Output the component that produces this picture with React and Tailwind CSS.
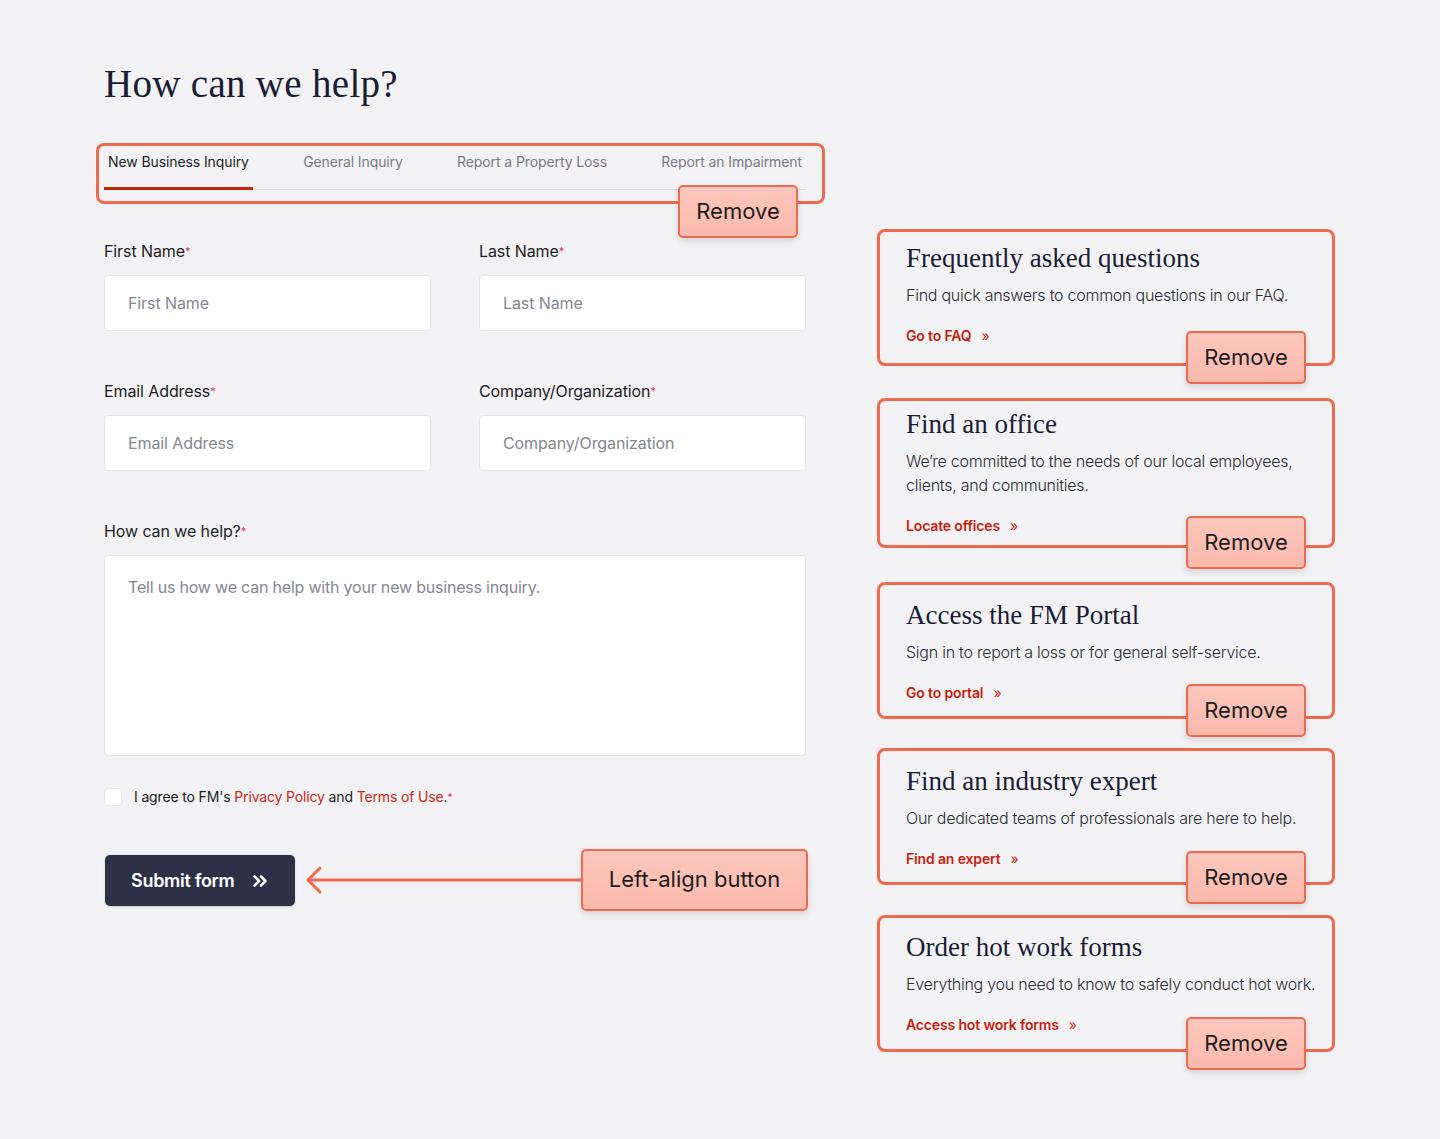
import React from "react";
import { ChevronsRight } from "lucide-react";

function RemoveBtn({ className = "" }) {
  return (
    <div
      className={`absolute w-[120px] h-[53px] rounded-[5px] border-2 border-[#ec6b4f] bg-gradient-to-b from-[#fdc6bc] to-[#fbb9ad] shadow-[0_3px_6px_rgba(0,0,0,0.12)] flex items-center justify-center text-[22px] text-[#1c1c1c] ${className}`}
    >
      Remove
    </div>
  );
}

function Field({ label, placeholder }) {
  return (
    <div className="flex flex-col">
      <label className="text-[16px] leading-[24px] text-[#1d1d25] tracking-[-0.1px]">
        {label}
        <span className="text-[#e2335a] text-[11px] align-top">*</span>
      </label>
      <div className="mt-[12px] h-[56px] bg-white border border-[#e4e4e9] rounded-[4px] flex items-center pl-[23px] text-[16px] text-[#86868f] tracking-[-0.1px]">
        {placeholder}
      </div>
    </div>
  );
}

const items = [
  {
    title: "Frequently asked questions",
    desc: ["Find quick answers to common questions in our FAQ."],
    link: "Go to FAQ",
    boxTop: "top-[-12px]",
    boxH: "h-[137px]",
    btnTop: "top-[90px]",
    mt: "",
  },
  {
    title: "Find an office",
    desc: ["We\u2019re committed to the needs of our local employees,", "clients, and communities."],
    link: "Locate offices",
    boxTop: "top-[-9px]",
    boxH: "h-[150px]",
    btnTop: "top-[109px]",
    mt: "mt-[61px]",
  },
  {
    title: "Access the FM Portal",
    desc: ["Sign in to report a loss or for general self-service."],
    link: "Go to portal",
    boxTop: "top-[-16px]",
    boxH: "h-[137px]",
    btnTop: "top-[86px]",
    mt: "mt-[62px]",
  },
  {
    title: "Find an industry expert",
    desc: ["Our dedicated teams of professionals are here to help."],
    link: "Find an expert",
    boxTop: "top-[-16px]",
    boxH: "h-[137px]",
    btnTop: "top-[87px]",
    mt: "mt-[61px]",
  },
  {
    title: "Order hot work forms",
    desc: ["Everything you need to know to safely conduct hot work."],
    link: "Access hot work forms",
    boxTop: "top-[-15px]",
    boxH: "h-[137px]",
    btnTop: "top-[87px]",
    mt: "mt-[61px]",
  },
];

export default function App() {
  const tabs = [
    "New Business Inquiry",
    "General Inquiry",
    "Report a Property Loss",
    "Report an Impairment",
  ];
  return (
    <div className="min-h-[1139px] w-full bg-[#f2f2f4] font-[Inter,sans-serif] pl-[104px] pt-[61px]">
      <h1 className="font-['Liberation_Serif',serif] text-[39px] leading-[46px] text-[#1b1c35] tracking-[0.3px]">
        How can we help?
      </h1>

      <div className="mt-[43px] flex items-start">
        {/* LEFT: form */}
        <div className="w-[702px] flex flex-col">
          <div className="relative">
            <div className="flex justify-between border-b border-[#d9d9de]">
              {tabs.map((t, i) => (
                <div
                  key={t}
                  className={`h-[40px] pt-[2px] px-[4px] -mb-px text-[14px] leading-[20px] tracking-[-0.1px] ${
                    i === 0
                      ? "text-[#1d1d27] border-b-[3px] border-[#c8250f]"
                      : "text-[#7a7a84]"
                  }`}
                >
                  {t}
                </div>
              ))}
            </div>
            <div className="absolute left-[-8px] top-[-7px] w-[729px] h-[61px] border-[3px] border-[#ec6b4f] rounded-[8px] pointer-events-none" />
            <RemoveBtn className="left-[574px] top-[35px]" />
          </div>

          <div className="mt-[49px] grid grid-cols-2 gap-x-[48px]">
            <Field label="First Name" placeholder="First Name" />
            <Field label="Last Name" placeholder="Last Name" />
          </div>
          <div className="mt-[48px] grid grid-cols-2 gap-x-[48px]">
            <Field label="Email Address" placeholder="Email Address" />
            <Field label="Company/Organization" placeholder="Company/Organization" />
          </div>

          <div className="mt-[48px] flex flex-col">
            <label className="text-[16px] leading-[24px] text-[#1d1d25] tracking-[-0.1px]">
              How can we help?
              <span className="text-[#e2335a] text-[11px] align-top">*</span>
            </label>
            <div className="mt-[12px] h-[201px] bg-white border border-[#e4e4e9] rounded-[4px] pl-[23px] pt-[19px] text-[16px] leading-[24px] text-[#86868f] tracking-[-0.2px]">
              Tell us how we can help with your new business inquiry.
            </div>
          </div>

          <div className="mt-[32px] flex items-center h-[18px]">
            <div className="w-[18px] h-[18px] bg-white border border-[#e6e6ea] rounded-[4px]" />
            <span className="ml-[12px] text-[14px] leading-[20px] text-[#1d1d25] tracking-[-0.15px]">
              I agree to FM's <span className="text-[#c8281a]">Privacy Policy</span> and{" "}
              <span className="text-[#c8281a]">Terms of Use</span>.
              <span className="text-[#e2335a] text-[10px] align-top">*</span>
            </span>
          </div>

          <div className="mt-[43px] flex items-center h-[61px]">
            <div className="ml-px mt-[2px] shrink-0 w-[190px] h-[51px] bg-[#2e3048] rounded-[5px] flex items-center pl-[26px] text-white text-[18px] font-semibold tracking-[-0.3px] shadow-[0_1px_2px_rgba(0,0,0,0.15)]">
              Submit form
              <ChevronsRight className="ml-[14px]" size={22} strokeWidth={2.75} />
            </div>
            <svg className="ml-[10px] shrink-0" width="276" height="30" viewBox="0 0 276 30">
              <path d="M2 15 H276" stroke="#ec6b4f" strokeWidth="3" fill="none" />
              <path d="M15 3 L3 15 L15 27" stroke="#ec6b4f" strokeWidth="3" fill="none" strokeLinecap="round" strokeLinejoin="round" />
            </svg>
            <div className="w-[227px] h-[62px] rounded-[5px] border-2 border-[#ec6b4f] bg-gradient-to-b from-[#fdc6bc] to-[#fbb9ad] shadow-[0_3px_6px_rgba(0,0,0,0.12)] flex items-center justify-center text-[22px] text-[#1c1c1c] shrink-0">
              Left-align button
            </div>
          </div>
        </div>

        {/* RIGHT: cards */}
        <div className="ml-[100px] pt-[91px] w-[430px] flex flex-col">
          {items.map((it) => (
            <div key={it.title} className={`relative ${it.mt}`}>
              <div className="font-['Liberation_Serif',serif] text-[27px] leading-[34px] text-[#1b1c35]">
                {it.title}
              </div>
              <div className="mt-[8px] text-[16px] leading-[24px] text-[#2a2a33] font-light whitespace-nowrap tracking-[-0.25px]">
                {it.desc.map((d) => (
                  <div key={d}>{d}</div>
                ))}
              </div>
              <div className="mt-[19px] text-[14px] leading-[20px] font-semibold text-[#c41e0f] flex items-center tracking-[-0.15px]">
                {it.link}
                <span className="ml-[10px] font-normal">»</span>
              </div>
              <div className={`absolute left-[-29px] ${it.boxTop} w-[458px] ${it.boxH} border-[3px] border-[#ec6b4f] rounded-[8px] pointer-events-none`} />
              <RemoveBtn className={`left-[280px] ${it.btnTop}`} />
            </div>
          ))}
        </div>
      </div>
    </div>
  );
}
